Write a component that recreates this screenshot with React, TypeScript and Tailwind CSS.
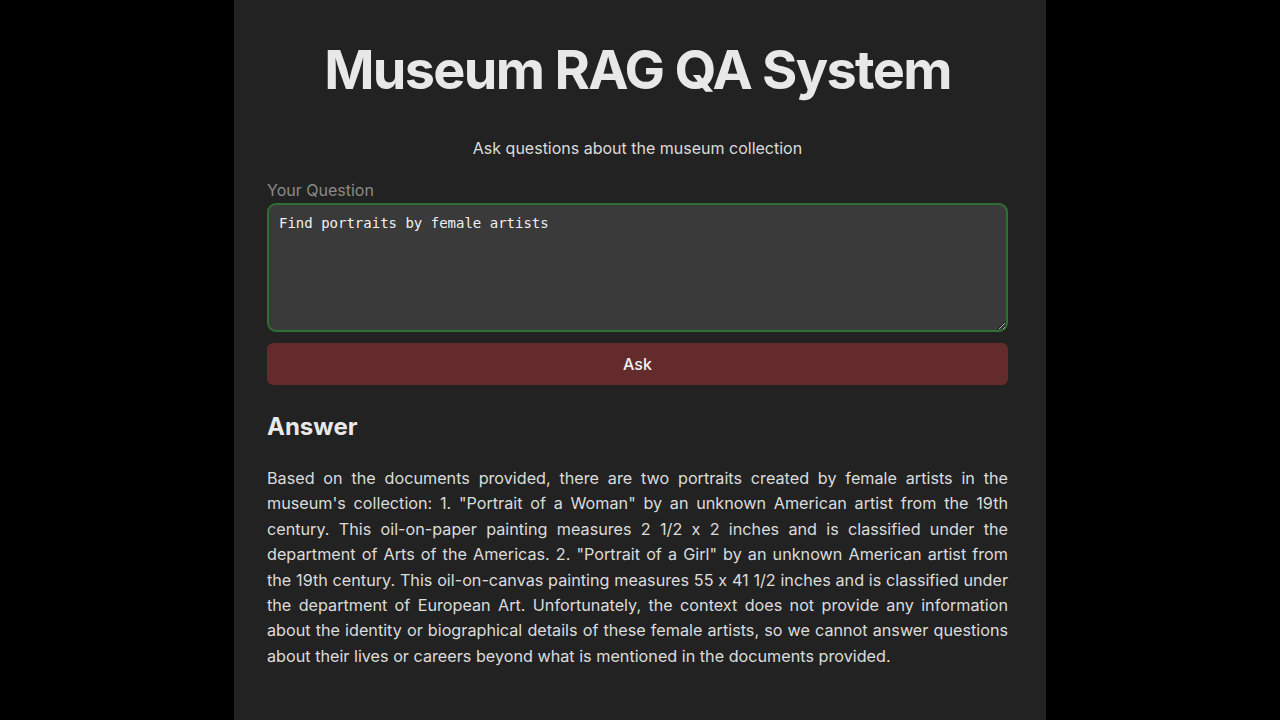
export default function App() {
  const answer =
    'Based on the documents provided, there are two portraits created by female artists in the museum\'s collection: 1. "Portrait of a Woman" by an unknown American artist from the 19th century. This oil-on-paper painting measures 2 1/2 x 2 inches and is classified under the department of Arts of the Americas. 2. "Portrait of a Girl" by an unknown American artist from the 19th century. This oil-on-canvas painting measures 55 x 41 1/2 inches and is classified under the department of European Art. Unfortunately, the context does not provide any information about the identity or biographical details of these female artists, so we cannot answer questions about their lives or careers beyond what is mentioned in the documents provided.';

  return (
    <div className="min-h-screen bg-black flex justify-center font-['Inter',sans-serif] [font-feature-settings:'calt'_0]">
      <div className="w-[812px] min-h-screen bg-[#222222] pl-[33px] pr-[38px] pt-[36px]">
        <h1 className="text-center text-[54px] font-bold leading-[68px] tracking-[-1.7px] text-[#e8e8e8]">
          Museum RAG QA System
        </h1>
        <p className="mt-[32px] text-center text-[16px] leading-6 text-[#dcdcdc]">
          Ask questions about the museum collection
        </p>

        <label className="mt-[18px] block text-[16px] leading-6 text-[#8a8a8a]">
          Your Question
        </label>
        <textarea
          className="mt-[1px] block h-[129px] w-full resize-y rounded-[9px] border-2 border-[#2f6f30] bg-[#3a3a3a] px-[10px] pt-[7px] pb-[7px] font-['DejaVu_Sans_Mono',monospace] text-[14px] leading-[22px] text-[#f0f0f0] outline-none"
          defaultValue="Find portraits by female artists"
        />
        <button className="mt-[11px] block h-[42px] w-full rounded-[6px] bg-[#632b2b] text-[16px] font-medium text-[#f2f2f2]">
          Ask
        </button>

        <h2 className="mt-[26px] text-[24px] font-bold leading-8 text-[#e8e8e8]">
          Answer
        </h2>
        <p className="mt-[23px] text-justify text-[16.2px] leading-[25.4px] text-[#dcdcdc]">
          {answer}
        </p>
      </div>
    </div>
  );
}
